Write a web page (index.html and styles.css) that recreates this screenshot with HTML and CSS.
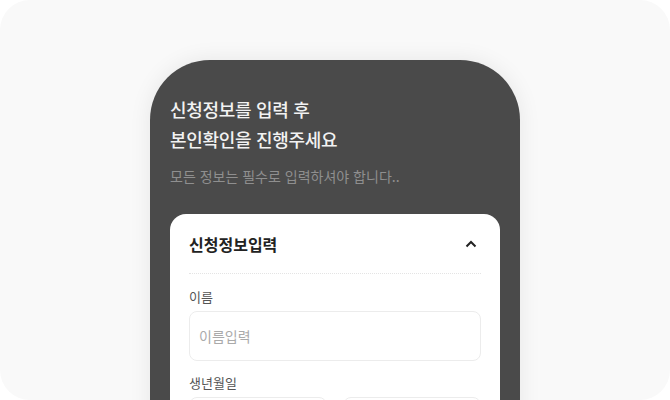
FILE: index.html
```html
<!DOCTYPE html>
<html lang="ko">
<head>
	<meta charset="UTF-8">
	<title>신청정보 입력</title>
	<link rel="stylesheet" href="styles.css">
</head>
<body>
<div class="stage">
	<div class="phone">
		<div class="intro">
			<h1 class="introTitle">신청정보를 입력 후<br>본인확인을 진행주세요</h1>
			<p class="introSub">모든 정보는 필수로 입력하셔야 합니다..</p>
		</div>

		<div class="formCard">
			<div class="cardHead">
				<h2 class="cardTitle">신청정보입력</h2>
				<svg class="chevron" width="14" height="14" viewBox="0 0 14 14">
					<path d="M2.5 9.5 L7 5 L11.5 9.5" fill="none" stroke="#222" stroke-width="2"/>
				</svg>
			</div>

			<div class="field">
				<label class="fieldLabel">이름</label>
				<input class="textBox" type="text" placeholder="이름입력">
			</div>

			<div class="field">
				<label class="fieldLabel">생년월일</label>
				<div class="fieldRow">
					<input class="textBox" type="text">
					<input class="textBox" type="text">
				</div>
			</div>
		</div>
	</div>
</div>
</body>
</html>
```

FILE: styles.css
```css
html, body{
	margin:0;
	padding:0;
	background:#fff;
}
body{
	font-family:"Noto Sans CJK KR", "Noto Sans", sans-serif;
}
.stage{
	width:670px;
	height:400px;
	background:#f9f9f9;
	border-radius:30px;
	overflow:hidden;
	display:flex;
	justify-content:center;
	padding-top:60px;
	box-sizing:border-box;
}
.phone{
	width:370px;
	height:420px;
	background:#4a4a4a;
	border-radius:60px 60px 0 0;
	box-shadow:0 0 22px rgba(0,0,0,0.08);
	padding:34px 20px 0;
	box-sizing:border-box;
}
.intro{
	height:120px;
}
.introTitle{
	margin:0;
	color:#f2f2f2;
	font-size:18px;
	font-weight:500;
	line-height:30px;
	letter-spacing:-0.3px;
}
.introSub{
	margin:12px 0 0;
	color:#8f8f8f;
	font-size:14px;
	line-height:20px;
	letter-spacing:0;
}
.formCard{
	background:#fff;
	border-radius:16px;
	padding:0 19px;
}
.cardHead{
	height:59px;
	display:flex;
	align-items:center;
	justify-content:space-between;
	border-bottom:1px dotted #e4e4e4;
	margin-bottom:14px;
}
.cardTitle{
	margin:0;
	font-size:16px;
	font-weight:700;
	color:#222;
	letter-spacing:0;
	padding-top:1px;
}
.chevron{
	margin-right:3px;
	margin-top:1px;
}
.field{
	margin-bottom:13px;
}
.fieldLabel{
	display:block;
	font-size:13px;
	color:#555;
	line-height:18px;
	margin-bottom:5px;
}
.textBox{
	display:block;
	width:100%;
	height:50px;
	box-sizing:border-box;
	border:1.5px solid #ececec;
	border-radius:8px;
	padding:0 9px;
	font-family:"Noto Sans CJK KR", "Noto Sans", sans-serif;
	font-size:14px;
	color:#222;
	outline:none;
}
.textBox::placeholder{
	color:#aaa;
}
.fieldRow{
	display:flex;
	gap:16px;
}
```
